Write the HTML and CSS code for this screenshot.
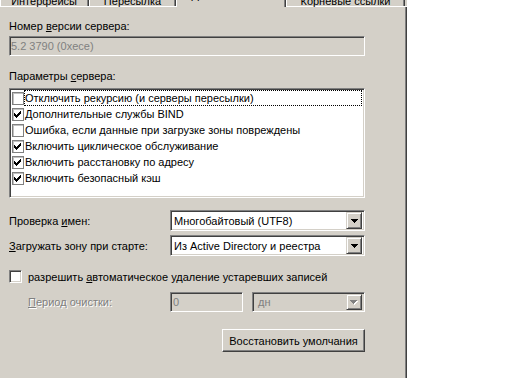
FILE: index.html
```html
<!DOCTYPE html>
<html>
  <head>
    <meta charset="UTF-8">
    <link rel="stylesheet" href="styles.css">
  </head>
  <body>
    <div class="dialog">
      <div class="tabs">
        <div class="tab tab-first">Интерфейсы</div>
        <div class="tab tab-second">Пересылка</div>
        <div class="tab tab-sel">Дополнительно</div>
        <div class="tab tab-last">Корневые ссылки</div>
      </div>
      <div class="panel">
        <div class="inner">
          <div class="label">Номер <u>в</u>ерсии сервера:</div>
          <div class="field version sunken">5.2 3790 (0xece)</div>

          <div class="label params">Параметры <u>с</u>ервера:</div>
          <ul class="list sunken">
            <li><span class="lcb"></span><span class="item focus">Отключить рекурсию (и серверы пересылки)</span></li>
            <li><span class="lcb on"><svg width="10" height="10" viewBox="0 0 10 10"><path d="M1 4h1v1h1v1h1v-1h1v-1h1v-1h1v-1h1v3h-1v1h-1v1h-1v1h-1v1h-1v-1h-1v-1h-1z"/></svg></span><span class="item">Дополнительные службы BIND</span></li>
            <li><span class="lcb"></span><span class="item">Ошибка, если данные при загрузке зоны повреждены</span></li>
            <li><span class="lcb on"><svg width="10" height="10" viewBox="0 0 10 10"><path d="M1 4h1v1h1v1h1v-1h1v-1h1v-1h1v-1h1v3h-1v1h-1v1h-1v1h-1v1h-1v-1h-1v-1h-1z"/></svg></span><span class="item">Включить циклическое обслуживание</span></li>
            <li><span class="lcb on"><svg width="10" height="10" viewBox="0 0 10 10"><path d="M1 4h1v1h1v1h1v-1h1v-1h1v-1h1v-1h1v3h-1v1h-1v1h-1v1h-1v1h-1v-1h-1v-1h-1z"/></svg></span><span class="item">Включить расстановку по адресу</span></li>
            <li><span class="lcb on"><svg width="10" height="10" viewBox="0 0 10 10"><path d="M1 4h1v1h1v1h1v-1h1v-1h1v-1h1v-1h1v3h-1v1h-1v1h-1v1h-1v1h-1v-1h-1v-1h-1z"/></svg></span><span class="item">Включить безопасный кэш</span></li>
          </ul>

          <div class="row row-first">
            <span>Проверка <u>и</u>мен:</span>
            <div class="combo sunken">
              <span class="combo-text">Многобайтовый (UTF8)</span>
              <span class="drop"><svg width="7" height="4" viewBox="0 0 7 4"><path d="M0 0h7v1h-1v1h-1v1h-1v1h-1v-1h-1v-1h-1v-1h-1z"/></svg></span>
            </div>
          </div>
          <div class="row row-second">
            <span><u>З</u>агружать зону при старте:</span>
            <div class="combo sunken">
              <span class="combo-text">Из Active Directory и реестра</span>
              <span class="drop"><svg width="7" height="4" viewBox="0 0 7 4"><path d="M0 0h7v1h-1v1h-1v1h-1v1h-1v-1h-1v-1h-1v-1h-1z"/></svg></span>
            </div>
          </div>

          <label class="check-row">
            <span class="cb sunken"></span>
            <span>разрешить <u>а</u>втоматическое удаление устаревших записей</span>
          </label>

          <div class="period">
            <span class="disabled period-label"><u>П</u>ериод очистки:</span>
            <div class="field edit-off sunken">0</div>
            <div class="combo combo-off sunken">
              <span class="combo-text">дн</span>
              <span class="drop drop-off"><svg width="8" height="5" viewBox="0 0 8 5"><path fill="#fff" d="M1 1h7v1h-1v1h-1v1h-1v1h-1v-1h-1v-1h-1v-1h-1z"/><path fill="#808080" d="M0 0h7v1h-1v1h-1v1h-1v1h-1v-1h-1v-1h-1v-1h-1z"/></svg></span>
            </div>
          </div>

          <div class="actions">
            <button class="btn">Восстановить умолчания</button>
          </div>
        </div>
      </div>
    </div>
  </body>
</html>
```

FILE: styles.css
```css
html, body {
  margin: 0;
  padding: 0;
  background: #fff;
  font-family: "Liberation Sans", Arial, sans-serif;
  font-size: 11px;
  color: #000;
}
* {
  box-sizing: border-box;
}
u {
  text-decoration: underline;
  text-underline-offset: 1px;
}
.dialog {
  width: 407px;
  height: 378px;
  display: flex;
  flex-direction: column;
}
.tabs {
  flex: none;
  height: 7px;
  display: flex;
  align-items: flex-end;
  overflow: hidden;
  background: linear-gradient(to top, #fff 1px, #d4d0c8 1px);
}
.tab {
  height: 17px;
  margin-bottom: 1px;
  border-top: 1px solid #fff;
  border-left: 1px solid #fff;
  border-right: 1px solid #404040;
  box-shadow: inset -1px 0 #808080;
  background: #d4d0c8;
  display: flex;
  align-items: flex-end;
  justify-content: center;
  line-height: 9px;
  white-space: nowrap;
}
.tab-first {
  width: 89px;
  justify-content: flex-end;
  padding-right: 11px;
}
.tab-second {
  width: 87px;
}
.tab-sel {
  width: 110px;
  height: 22px;
  margin-bottom: 0;
  padding-bottom: 7px;
}
.tab-last {
  width: 119px;
}
.panel {
  flex: 1;
  background: #d4d0c8;
  border-right: 1px solid #404040;
  box-shadow: inset -1px 0 #808080;
  padding: 13px 0 0 9px;
}
.inner {
  width: 356px;
}
.label {
  line-height: 13px;
}
.sunken {
  border: 1px solid;
  border-color: #808080 #fff #fff #808080;
  box-shadow: inset 1px 1px #404040, inset -1px -1px #d4d0c8;
}
.field {
  height: 20px;
  display: flex;
  align-items: center;
  padding-left: 1px;
  background: #d4d0c8;
  color: #808080;
}
.version {
  margin-top: 3px;
}
.params {
  margin-top: 14px;
}
.list {
  margin: 5px 0 0 0;
  padding: 1px;
  height: 110px;
  list-style: none;
  background: #fff;
}
.list li {
  height: 16px;
  display: flex;
  align-items: center;
  white-space: nowrap;
}
.lcb {
  width: 12px;
  height: 13px;
  margin-left: 1px;
  border: 1px solid #808080;
  box-shadow: inset 1px 1px #c0c0c0;
  background: #fff;
  display: flex;
  align-items: center;
  justify-content: center;
}
.lcb svg {
  display: block;
}
.item {
  height: 16px;
  line-height: 14px;
  border: 1px solid transparent;
}
.focus {
  flex: 1;
  margin-right: 1px;
  border: 1px dotted #000;
}
.row {
  display: grid;
  grid-template-columns: 161px 195px;
  align-items: center;
  height: 21px;
}
.row-first {
  margin-top: 12px;
}
.row-second {
  margin-top: 4px;
}
.combo {
  height: 21px;
  display: flex;
  align-items: center;
  padding: 2px;
  background: #fff;
}
.combo-text {
  flex: 1;
  padding-left: 1px;
  white-space: nowrap;
}
.drop {
  width: 16px;
  height: 17px;
  border: 1px solid;
  border-color: #d4d0c8 #404040 #404040 #d4d0c8;
  box-shadow: inset 1px 1px #fff, inset -1px -1px #808080;
  background: #d4d0c8;
  display: flex;
  align-items: center;
  justify-content: center;
}
.drop svg {
  display: block;
}
.check-row {
  display: flex;
  align-items: center;
  gap: 6px;
  height: 13px;
  margin-top: 14px;
}
.cb {
  width: 13px;
  height: 13px;
  background: #fff;
}
.period {
  display: grid;
  grid-template-columns: 152px 73px 113px;
  column-gap: 9px;
  align-items: center;
  height: 20px;
  margin-top: 9px;
}
.period .combo {
  height: 20px;
}
.period-label {
  padding-left: 19px;
}
.disabled {
  color: #808080;
  text-shadow: 1px 1px #fff;
}
.edit-off {
  padding-left: 2px;
}
.combo-off {
  background: #d4d0c8;
  color: #808080;
}
.combo-off .combo-text {
  padding-left: 3px;
}
.drop-off {
  height: 16px;
}
.actions {
  display: flex;
  justify-content: flex-end;
  margin-top: 17px;
}
.btn {
  width: 143px;
  height: 23px;
  padding: 0;
  font: inherit;
  color: #000;
  background: #d4d0c8;
  border: 1px solid;
  border-color: #fff #404040 #404040 #fff;
  box-shadow: inset -1px -1px #808080, inset 1px 1px #d4d0c8;
  border-radius: 0;
}
```
